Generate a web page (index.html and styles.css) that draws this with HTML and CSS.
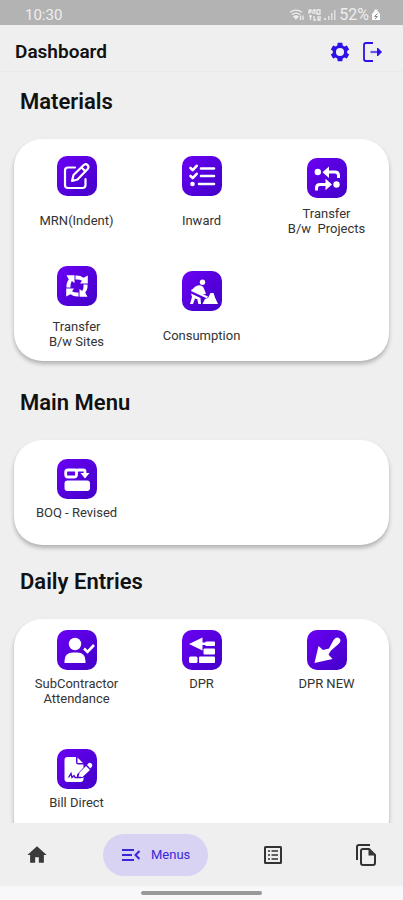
FILE: index.html
```html
<!DOCTYPE html>
<html lang="en">
<head>
<meta charset="utf-8">
<meta name="viewport" content="width=device-width, initial-scale=1">
<title>Dashboard</title>
<link rel="stylesheet" href="styles.css">
</head>
<body>
<svg class="defs" aria-hidden="true">
  <defs>
    <linearGradient id="tile" x1="0" y1="0" x2="1" y2="1">
      <stop offset="0" stop-color="#6a00f4"/>
      <stop offset="1" stop-color="#4200c8"/>
    </linearGradient>
  </defs>
</svg>
<div class="app">
  <div class="status">
    <span class="status-time">10:30</span>
    <span class="status-right">
      <svg width="15" height="12" viewBox="0 0 15 12" fill="none" stroke="#eee" stroke-width="1.3"><path d="M0 3.200Q6 -.8 12 3.200M2 5.600Q6 2.800 10 5.600"/><path d="M4 7.600Q6 6.400 8 7.600L6 9.800Z" fill="#eee"/><path d="M10.500 6.500v4.500M13 6.500v4.500" stroke-width="1.300"/></svg>
      <svg width="13" height="12" viewBox="0 0 13 12" fill="none" stroke="#eee" stroke-width="1.300"><path d="M1 1v4M1 1l2 0v2h-2M5 1v4M5 1h2v4M9 1v4h3V1zM1 7h3M2.500 7v4M6 7v4h2M10 7v4h2V7"/></svg>
      <svg width="12" height="12" viewBox="0 0 12 12" fill="#eee"><path d="M0 9h2v2H0zM4 7h1.500v4H4zM7 4h1.500v7H7zM10 1h1.500v10H10z" opacity=".8"/></svg>
      <span class="status-battery">52%</span>
      <svg width="8" height="12" viewBox="0 0 8 12"><path d="M2.500 2V.5h3V2L8 5v6H0V5z" fill="#fff"/><path d="M5.500 4.500l-3 3h3l-2.500 2.500" fill="none" stroke="#888"/></svg>
    </span>
  </div>

  <header class="topbar">
    <h1>Dashboard</h1>
    <button class="icon-btn" aria-label="Settings">
      <svg width="22" height="22" viewBox="0 0 24 24" fill="#2d12e8"><path fill-rule="evenodd" d="M9.500 2h5l.5 2.900 1.800 1 2.700-1 2.500 4.300-2.200 1.800v2l2.200 1.800-2.500 4.300-2.700-1-1.800 1-.5 2.900h-5L9 19.100l-1.800-1-2.700 1L2 14.800 4.200 13v-2L2 9.200l2.500-4.300 2.700 1 1.800-1zM12 7.600a4.400 4.400 0 1 0 0 8.800 4.400 4.400 0 0 0 0-8.800z"/></svg>
    </button>
    <button class="icon-btn" aria-label="Log out">
      <svg width="22" height="22" viewBox="0 0 22 22" fill="none" stroke="#2d12e8" stroke-width="1.800"><path d="M11 2H4Q2 2 2 4v14q0 2 2 2h7"/><path d="M8.500 11h10" stroke-width="2.200" opacity=".7"/><path d="M15.500 7l4 4-4 4z" fill="#2d12e8" stroke-width="1"/></svg>
    </button>
  </header>

  <main class="content">
    <section class="group group-materials">
      <h2>Materials</h2>
      <div class="card">
        <button class="item item-spaced">
          <svg class="tile" viewBox="0 0 40 40"><rect width="40" height="40" rx="10" fill="url(#tile)"/><g fill="none" stroke="#fff" stroke-width="2.200" stroke-linejoin="round" stroke-linecap="round"><path d="M18 11.500h-7q-3 0-3 3V29q0 3 3 3h14.500q3 0 3-3v-6"/><path d="M15 25l1.500-6L27 8.800q2-1.300 3.600.3t.3 3.600L20.500 23.500zM24.500 11.500l4 4"/></g></svg>
          <span>MRN(Indent)</span>
        </button>
        <button class="item item-spaced">
          <svg class="tile" viewBox="0 0 40 40"><rect width="40" height="40" rx="10" fill="url(#tile)"/><g fill="none" stroke="#fff" stroke-width="2.600" stroke-linecap="round" stroke-linejoin="round"><path d="M8.500 12l2.200 2.200 4-4.400M8.500 20l2.200 2.200 4-4.400M19 12.500h13M19 20h13M17 28h15"/></g><circle cx="10.500" cy="28" r="2.300" fill="#fff"/></svg>
          <span>Inward</span>
        </button>
        <button class="item item-lowered">
          <svg class="tile" viewBox="0 0 40 40"><rect width="40" height="40" rx="10" fill="url(#tile)"/><g fill="#fff"><circle cx="10.800" cy="14" r="3.200"/><circle cx="29.500" cy="26.500" r="3.200"/><path d="M15.500 14.200l6.500-5.700v11.400zM25 26.500l-6.500-5.700v11.400z"/></g><g fill="none" stroke="#fff" stroke-width="3"><path d="M21 14h7q3.500 0 3.500 3.500V20M20 26.500h-7q-3.500 0-3.500 3.500v2.500"/></g></svg>
          <span>Transfer<br>B/w&nbsp; Projects</span>
        </button>
        <button class="item item-two-line">
          <svg class="tile" viewBox="0 0 40 40"><defs><path id="turn" d="M18.500 9.500Q23 9 26.500 11.800L30.800 9.500V17.500H23L25 14.800Q22 13 18.500 13.500z"/></defs><rect width="40" height="40" rx="10" fill="url(#tile)"/><g fill="#fff"><use href="#turn"/><use href="#turn" transform="rotate(90 20 20)"/><use href="#turn" transform="rotate(180 20 20)"/><use href="#turn" transform="rotate(270 20 20)"/></g></svg>
          <span>Transfer<br>B/w Sites</span>
        </button>
        <button class="item item-dropped">
          <svg class="tile" viewBox="0 0 40 40"><rect width="40" height="40" rx="10" fill="url(#tile)"/><g fill="#fff"><circle cx="20.500" cy="11.300" r="2.700"/><path d="M10 19.500q2.500-5 7-5.200 4 0 5 3.500l2 5-3 .700z"/><path d="M9 22.500l9.500 4.500.500 6h-2.700l-1-4.700-2.300-.800-2 5.500H8l2-7z"/><path d="M20.500 33l2.500-5 3-1 2.500-5h3l1.500 4.500 3 6.500z"/></g><path d="M9.500 19l16 7.500" stroke="#fff" stroke-width="2"/></svg>
          <span>Consumption</span>
        </button>
      </div>
    </section>

    <section class="group group-main">
      <h2>Main Menu</h2>
      <div class="card">
        <button class="item">
          <svg class="tile" viewBox="0 0 40 40"><rect width="40" height="40" rx="10" fill="url(#tile)"/><rect x="7.500" y="21.500" width="25.500" height="10.500" rx="3" fill="#fff"/><path d="M19.500 11H11q-2.300 0-2.300 2.300v2.400q0 2.300 2.300 2.300h6q2.500 0 2.500-2.300V13q0-2 2-2h5q1.500 0 1.500 1.500V15" fill="none" stroke="#fff" stroke-width="2.800"/><path d="M23.500 14h9L28 19.500z" fill="#fff"/></svg>
          <span>BOQ - Revised</span>
        </button>
      </div>
    </section>

    <section class="group group-daily">
      <h2>Daily Entries</h2>
      <div class="card">
        <button class="item">
          <svg class="tile" viewBox="0 0 40 40"><rect width="40" height="40" rx="10" fill="url(#tile)"/><circle cx="18" cy="14" r="6.200" fill="#fff"/><path d="M7.500 33v-2q0-8.500 8.500-8.500h4q8.500 0 8.500 8.500v2z" fill="#fff"/><path d="M27 18.500l3.500 3.500 6.500-7" fill="none" stroke="#fff" stroke-width="2.600"/></svg>
          <span>SubContractor<br>Attendance</span>
        </button>
        <button class="item">
          <svg class="tile" viewBox="0 0 40 40"><rect width="40" height="40" rx="10" fill="url(#tile)"/><g fill="#fff"><path d="M7 14L20.500 7.500V12.500H23l1-1h8q1 0 1 1v2.500q0 1-1 1h-8l-1-1h-2.500V20.500z"/><rect x="21.500" y="18.500" width="11.500" height="6" rx="1"/><rect x="7" y="26.500" width="8.500" height="6.500" rx="1.500"/><rect x="17" y="26.500" width="16" height="6.500" rx="1"/></g></svg>
          <span>DPR</span>
        </button>
        <button class="item">
          <svg class="tile" viewBox="0 0 40 40"><rect width="40" height="40" rx="10" fill="url(#tile)"/><path d="M7.500 33l4-17 4.500 4L22 18.500l4.500-8.500q3.500-4 6-1.500t-1.500 6L24 20.500l-2.500 4 4 4.500z" fill="#fff"/></svg>
          <span>DPR NEW</span>
        </button>
        <button class="item">
          <svg class="tile" viewBox="0 0 40 40"><rect width="40" height="40" rx="10" fill="url(#tile)"/><path d="M7.500 11q0-3 3-3h8.500v5q0 2.500 2.500 2.500h5v3L20 25.500v3.500h5.500l1-1v2q0 3-3 3h-13q-3 0-3-3zM20.500 8.500l5.500 5.500h-5.500z" fill="#fff"/><path d="M21.500 28l1-4.500 6.500-6.500 4 4-7.500 7zM30 16l1.500-1.800q1.500-1 3 .3t.500 3L33.500 19.500z" fill="#fff"/><path d="M11.500 28.500l2.500-4 1 4 2-2 1 2h6" fill="none" stroke="#4b00d4" stroke-width="1.300"/></svg>
          <span>Bill Direct</span>
        </button>
      </div>
    </section>
  </main>

  <nav class="tabs">
    <a class="tab" href="#home" aria-label="Home"><svg width="22" height="22" viewBox="0 0 24 24" fill="#3a3a3a"><path d="M10 20.500v-6h4v6h5.500V12H22.500L12 2.500 1.500 12h3v8.500z"/></svg></a>
    <a class="tab tab-active" href="#menus">
      <svg width="20" height="18" viewBox="0 0 20 18" fill="none" stroke="#3c26d9" stroke-width="2"><path d="M1 4h12M1 9h10M1 14h12M18.500 5l-4 4 4 4"/></svg>
      <span>Menus</span>
    </a>
    <a class="tab" href="#list" aria-label="List"><svg width="20" height="20" viewBox="0 0 20 20" fill="none" stroke="#333"><rect x="2" y="2" width="16" height="16" rx=".5" stroke-width="2"/><path d="M5 6h2M8.500 6h6.500M5 10h2M8.500 10h6.500M5 14h2M8.500 14h6.500" stroke-width="1.500"/></svg></a>
    <a class="tab tab-last" href="#files" aria-label="Files"><svg width="22" height="24" viewBox="0 0 22 24" fill="none" stroke="#333" stroke-width="2"><path d="M2 17V4q0-2 2-2h11"/><path d="M6 8q0-2 2-2h6l6 6v8q0 2-2 2H8q-2 0-2-2z"/><path d="M13.500 6.500v6h6z" fill="#333" stroke="none"/></svg></a>
  </nav>
  <div class="gesture"><span class="gesture-pill"></span></div>
</div>
</body>
</html>
```

FILE: styles.css
```css
* { box-sizing: border-box; }

body {
  margin: 0;
  background: #efefef;
  color: #111;
  font-family: Roboto, "Liberation Sans", sans-serif;
}

button {
  padding: 0;
  border: 0;
  background: none;
  color: inherit;
  font: inherit;
  cursor: pointer;
}

svg { display: block; }

.defs { position: absolute; width: 0; height: 0; }

.app {
  display: flex;
  flex-direction: column;
  height: 100vh;
}

.status {
  display: flex;
  align-items: center;
  justify-content: space-between;
  height: 25px;
  padding: 4px 23px 0 25px;
  background: #b3b3b3;
  color: #eee;
  font-size: 15px;
}

.status-right { display: flex; align-items: center; gap: 3px; }

.status-battery { font-size: 16px; }

.topbar {
  display: flex;
  align-items: center;
  gap: 11px;
  height: 47px;
  padding: 8px 19px 0 15px;
  border-bottom: 1px solid #e9e9e9;
}

.topbar h1 {
  flex: 1;
  margin: 0;
  font-size: 19px;
  line-height: 24px;
  font-weight: 600;
}

.content {
  flex: 1;
  min-height: 0;
  overflow-y: auto;
  scrollbar-width: none;
  padding: 16px 14px 24px;
}

.group h2 {
  margin: 0 6px 23px;
  font-size: 22px;
  line-height: 28px;
  font-weight: 600;
}

.card {
  display: grid;
  grid-template-columns: repeat(3, 1fr);
  align-items: start;
  border-radius: 28px;
  background: #fff;
  box-shadow: 0 3px 4px rgba(0, 0, 0, .26);
}

.group-materials .card { row-gap: 30px; margin-bottom: 28px; padding: 17px 0 12px; }
.group-main .card { margin-bottom: 23px; padding: 19px 0 25px; }
.group-daily .card { row-gap: 43px; padding: 11px 0 36px; }

.item {
  display: flex;
  flex-direction: column;
  align-items: center;
  gap: 6px;
  color: #333;
  font-size: 13px;
  line-height: 15px;
  text-align: center;
}

.item-spaced { gap: 17px; }
.item-lowered { gap: 8px; padding-top: 2px; }
.item-two-line { gap: 13px; }
.item-dropped { gap: 17px; padding-top: 5px; }

.tile { width: 40px; height: 40px; }

.tabs {
  display: flex;
  align-items: center;
  gap: 55px;
  height: 63px;
  padding: 0 26px;
}

.tab {
  display: flex;
  align-items: center;
  color: #333;
  text-decoration: none;
}

.tab-last { margin-left: auto; }

.tab-active {
  gap: 10px;
  height: 42px;
  padding: 0 18px;
  border-radius: 21px;
  background: #d9d3f3;
  color: #3c26d9;
  font-size: 13px;
}

.gesture {
  display: flex;
  justify-content: center;
  height: 14px;
  padding-top: 5px;
  background: #f8f8fa;
}

.gesture-pill {
  width: 30%;
  height: 4px;
  border-radius: 2px;
  background: #999;
}
```
